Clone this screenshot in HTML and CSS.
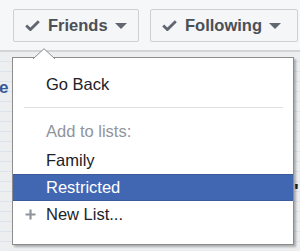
FILE: index.html
```html
<!DOCTYPE html>
<html>
<head>
<meta charset="utf-8">
<link rel="stylesheet" href="styles.css">
</head>
<body>
<div class="page">
  <div class="toolbar">
    <div class="btn btn-friends">
      <svg class="check" width="15" height="11" viewBox="0 0 15 11"><path d="M1.2 5.6 L5.4 9.6 L13.8 1.2" fill="none" stroke="#606770" stroke-width="2.8"/></svg>
      <span class="label">Friends</span>
      <svg class="caret" width="12" height="6" viewBox="0 0 12 6"><path d="M0 0 H12 L6 6 Z" fill="#606770"/></svg>
    </div>
    <div class="btn btn-following">
      <svg class="check" width="15" height="11" viewBox="0 0 15 11"><path d="M1.2 5.6 L5.4 9.6 L13.8 1.2" fill="none" stroke="#606770" stroke-width="2.8"/></svg>
      <span class="label">Following</span>
      <svg class="caret" width="12" height="6" viewBox="0 0 12 6"><path d="M0 0 H12 L6 6 Z" fill="#606770"/></svg>
    </div>
  </div>
  <div class="content">
    <span class="peek">e</span>
    <span class="peek-right">'</span>
  </div>
  <div class="menu">
    <svg class="notch" width="22" height="11" viewBox="0 0 22 11"><path d="M0 11 L11 0.7 L22 11" fill="#fff" stroke="#8c8c8c" stroke-width="1"/></svg>
    <div class="item">Go Back</div>
    <div class="sep"></div>
    <div class="item header">Add to lists:</div>
    <div class="item">Family</div>
    <div class="item selected">Restricted</div>
    <div class="item newlist">
      <svg class="plus" width="11" height="11" viewBox="0 0 11 11"><path d="M5.5 0.5 V10.5 M0.5 5.5 H10.5" stroke="#90949c" stroke-width="2.2"/></svg>
      <span>New List...</span>
    </div>
  </div>
</div>
</body>
</html>
```

FILE: styles.css
```css
html, body {
  margin: 0;
  padding: 0;
}
body {
  width: 300px;
  height: 251px;
  overflow: hidden;
  font-family: "Liberation Sans", Arial, sans-serif;
  background: #f6f7f8;
}
.page {
  position: relative;
  width: 300px;
  height: 251px;
}
.toolbar {
  display: flex;
  gap: 11px;
  padding: 9px 0 0 13px;
  height: 41px;
  box-sizing: border-box;
}
.btn {
  display: flex;
  align-items: center;
  box-sizing: border-box;
  height: 33px;
  background: #f5f6f7;
  border: 1px solid #ced0d4;
  border-radius: 2px;
  padding-left: 11px;
  color: #4b4f56;
}
.btn-friends {
  width: 126px;
}
.btn-following {
  width: 148px;
}
.check {
  flex: none;
}
.label {
  font-weight: bold;
  font-size: 16.5px;
  margin-left: 8px;
  margin-right: 7px;
}
.caret {
  flex: none;
  margin-top: 1px;
}
.content {
  margin-top: 9px;
  height: 201px;
  border-top: 2px solid #d3d4d6;
  background-color: #eceef0;
  background-image: repeating-linear-gradient(to bottom, transparent 0, transparent 9px, #dde3ec 9px, #dde3ec 10px);
  position: relative;
}
.peek {
  position: absolute;
  left: -1px;
  top: 26px;
  font-size: 17px;
  font-weight: bold;
  color: #365899;
}
.peek-right {
  position: absolute;
  left: 294px;
  top: 128px;
  font-size: 20px;
  font-weight: bold;
  color: #1d2129;
}
.menu {
  position: absolute;
  left: 12px;
  top: 57px;
  width: 282px;
  height: 188px;
  box-sizing: border-box;
  background: #fff;
  border: 1px solid #8c8c8c;
  box-shadow: 2px 2px 2px rgba(0, 0, 0, 0.28);
  padding-top: 13px;
}
.notch {
  position: absolute;
  left: 20px;
  top: -10px;
}
.item {
  font-size: 16.5px;
  line-height: 27px;
  height: 27px;
  padding-left: 33px;
  color: #1d2129;
}
.sep {
  height: 1px;
  background: #dddfe2;
  margin: 9px 10px 10px 11px;
}
.header {
  color: #90949c;
  margin-bottom: 2px;
}
.selected {
  background: #4267b2;
  color: #fff;
  box-sizing: border-box;
  border-top: 1px solid #3b5a9a;
  border-bottom: 1px solid #3b5a9a;
  line-height: 25px;
}
.newlist {
  display: flex;
  align-items: center;
  padding-left: 12px;
}
.plus {
  margin-right: 10px;
}
```
